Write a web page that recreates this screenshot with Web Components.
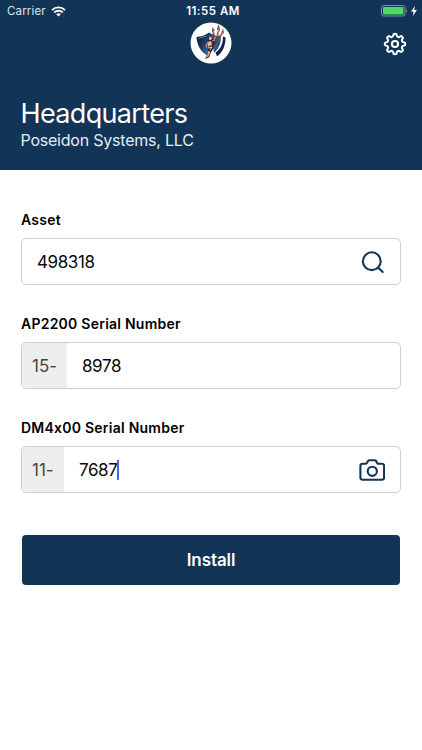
<!DOCTYPE html>
<html lang="en">
<head>
<meta charset="utf-8">
<title>Install</title>
<style>
    body {
        margin: 0;
        background: #fff;
        color: #0a0a0a;
        font-family: Inter, "Liberation Sans", sans-serif;
        font-feature-settings: "calt" 0;
    }
</style>
</head>
<body>
<install-screen></install-screen>

<script>
class StatusBar extends HTMLElement {
    constructor() {
        super();
        this.attachShadow({ mode: 'open' });
    }

    connectedCallback() {
        this.shadowRoot.innerHTML = `
            <style>
                :host {
                    display: grid;
                    grid-template-columns: 1fr auto 1fr;
                    align-items: center;
                    height: 22px;
                    padding: 0 5px 0 7px;
                    font-size: 11.5px;
                    line-height: 22px;
                }

                svg {
                    display: block;
                }

                .carrier, .power {
                    display: flex;
                    align-items: center;
                    gap: 5px;
                }

                .carrier {
                    color: #dbe4ee;
                    letter-spacing: 0.15px;
                }

                .power {
                    justify-content: flex-end;
                    gap: 3px;
                }

                .time {
                    padding-left: 2px;
                    font-weight: 600;
                    letter-spacing: 0.5px;
                }
            </style>

            <div class="carrier">
                <span>Carrier</span>
                <svg width="15" height="11" viewBox="0 0 15 11" fill="none" stroke="#fff" stroke-width="1.9">
                    <path d="M1 4.1a9.2 9.2 0 0 1 13 0M3.3 6.5a6 6 0 0 1 8.4 0"/>
                    <path d="M7.5 10.6 5.2 8.3a3.3 3.3 0 0 1 4.6 0z" fill="#fff" stroke="none"/>
                </svg>
            </div>
            <span class="time"><slot></slot></span>
            <div class="power">
                <svg width="27" height="12" viewBox="0 0 27 12">
                    <rect x=".5" y=".5" width="23.5" height="10.5" rx="2.2" fill="none" stroke="#8794a5"/>
                    <rect x="2" y="2" width="20.5" height="7.5" rx=".8" fill="#4cd964"/>
                    <path d="M25.2 4c1.3.5 1.3 3 0 3.6z" fill="#8794a5"/>
                </svg>
                <svg width="6" height="10" viewBox="0 0 6 10"><path d="M4 0 0 5.6h2.6L1.8 10 6 4.1H3.3z" fill="#fff"/></svg>
            </div>
        `;
    }
}

class TridentLogo extends HTMLElement {
    constructor() {
        super();
        this.attachShadow({ mode: 'open' });
    }

    connectedCallback() {
        this.shadowRoot.innerHTML = `
            <style>
                :host {
                    display: block;
                    width: 42px;
                    height: 42px;
                }

                svg {
                    display: block;
                }
            </style>

            <svg width="42" height="42" viewBox="0 0 42 42">
                <defs>
                    <linearGradient id="shield" x1="0" y1=".2" x2="1" y2=".7">
                        <stop offset="0" stop-color="#0d1a33"/>
                        <stop offset=".35" stop-color="#1d3d66"/>
                        <stop offset=".65" stop-color="#3778ad"/>
                        <stop offset="1" stop-color="#16365d"/>
                    </linearGradient>
                </defs>
                <circle cx="21" cy="21" r="20.5" fill="#fff"/>
                <!-- shield with its rim broken open on the right -->
                <path d="M6.500 15q7-.5 12.500-4.500l6 3 6 1.500c0 6-2 11-6 15l-6 4.500C11.500 31 7 24 6.500 15z" fill="url(#shield)"/>
                <path d="m8.500 16.500 8-2.500" stroke="#9db8d0" stroke-width=".6"/>
                <path d="M33 14.500 35.500 15.500c0 8-2.500 14.500-8.500 19l-1.500-4c5-3.500 7.500-8 7.500-16z" fill="#14233e"/>
                <path d="m17 36 2-8 4-3 1 6 3 4-6 2z" fill="#fff"/>
                <!-- trident -->
                <path d="M29 7.500 25.500 21 17 36" fill="none" stroke="#59363a" stroke-width="1.600"/>
                <path d="m23 9 1.200 4.500q3 2.500 6.300.5L33 9.500" fill="none" stroke="#703d39" stroke-width="1.700"/>
                <path d="m22 10 .3-5 2.700 3.800zM26.800 8l1.700-6 1.800 6zM31.200 11l2-5 .7 5.500z" fill="#8b4d43"/>
                <path d="m23.300 9 1.400 4 3.300 1L29 7M32.500 10 30 14" fill="none" stroke="#e7a992" stroke-width=".8"/>
                <!-- figure -->
                <path d="m18.500 15 3-1 1.500 4 2-2 1 2-2 4-1 5-2.500 3-1 5-4.500 2 2-4 1-6-2-3 1-4z" fill="#282631"/>
                <path d="m19 15 2-.5 1 2-1 1.500h-2zM17 20l4-1 1 4-4 2zM18 29l2.500.5-2 5-2.500 1.500 1.500-3.500z" fill="#e5a483"/>
                <path d="m22 19 2.500-.5.8-4M16 22l1 4" fill="none" stroke="#d68868" stroke-width="1.200"/>
                <path d="m18 22 4-1M19 17l2-1M18 26l4-1-2 3" fill="none" stroke="#b8d6e9" stroke-width="1"/>
            </svg>
        `;
    }
}

class LineIcon extends HTMLElement {
    constructor() {
        super();
        this.attachShadow({ mode: 'open' });
    }

    connectedCallback() {
        this.render();
    }

    // Eight rounded teeth around a 12,12 centre
    gearPath() {
        const at = (degrees, radius) => {
            const angle = degrees * Math.PI / 180;
            return `${(12 + radius * Math.sin(angle)).toFixed(2)} ${(12 - radius * Math.cos(angle)).toFixed(2)}`;
        };
        let path = `M${at(-8, 10)}`;
        for (let tooth = 0; tooth < 360; tooth += 45) {
            path += `Q${at(tooth, 10.6)} ${at(tooth + 8, 10)}`;
            path += `L${at(tooth + 13, 8.3)}`;
            path += `Q${at(tooth + 22.5, 7)} ${at(tooth + 32, 8.3)}`;
            path += `L${at(tooth + 37, 10)}`;
        }
        return path + 'Z';
    }

    render() {
        const icons = {
            settings: `<path d="${this.gearPath()}" stroke-width="2"/><circle cx="12" cy="12" r="3.1" stroke-width="2"/>`,
            search: '<circle cx="10.800" cy="11.200" r="8.900"/><path d="m17.300 17.700 4.400 4.300"/>',
            camera: '<path d="M2.600 4.800h3.200q.8 0 1.200-.7l1.200-2q.5-.8 1.400-.8h5.300q.9 0 1.400.8l1.200 2q.4.7 1.200.7h3.400q2.200 0 2.200 2v11.700q0 2.200-2.200 2.200H2.600q-2 0-2-2.200V6.800q0-2 2-2z"/><circle cx="12.500" cy="12.300" r="4.600"/>'
        };
        const name = this.getAttribute('name');
        const viewBox = name === 'camera' ? '-.8 -1 26.500 24' : '0 0 24 24';

        this.shadowRoot.innerHTML = `
            <style>
                :host {
                    display: block;
                    width: ${name === 'camera' ? '26.5px' : '24px'};
                    height: 24px;
                }

                svg {
                    display: block;
                    width: 100%;
                    height: 100%;
                }
            </style>

            <svg viewBox="${viewBox}" fill="none" stroke="currentColor" stroke-width="2.1" stroke-linecap="round" stroke-linejoin="round">${icons[name]}</svg>
        `;
    }
}

class SiteHeader extends HTMLElement {
    constructor() {
        super();
        this.attachShadow({ mode: 'open' });
    }

    connectedCallback() {
        this.shadowRoot.innerHTML = `
            <style>
                :host {
                    display: flex;
                    flex-direction: column;
                    box-sizing: border-box;
                    height: 170px;
                    background: #123456;
                    color: #fff;
                }

                .toolbar {
                    display: grid;
                    grid-template-columns: 1fr auto 1fr;
                    align-items: center;
                    height: 42px;
                    padding: 0 15px;
                }

                trident-logo {
                    grid-column: 2;
                }

                line-icon {
                    justify-self: end;
                    margin-top: 1px;
                }

                .titles {
                    padding: 33px 20.5px 0;
                }

                h1, p {
                    margin: 0;
                    font-weight: 400;
                    white-space: nowrap;
                }

                h1 {
                    font-size: 27px;
                    line-height: 33px;
                    letter-spacing: -0.65px;
                }

                p {
                    color: #e3edf6;
                    font-size: 16px;
                    line-height: 20px;
                    letter-spacing: -0.22px;
                }
            </style>

            <status-bar>11:55 AM</status-bar>
            <div class="toolbar">
                <trident-logo></trident-logo>
                <line-icon name="settings"></line-icon>
            </div>
            <div class="titles">
                <h1><slot name="title"></slot></h1>
                <p><slot name="company"></slot></p>
            </div>
        `;
    }
}

class FormField extends HTMLElement {
    constructor() {
        super();
        this.attachShadow({ mode: 'open' });
    }

    connectedCallback() {
        this.render();
    }

    render() {
        const prefix = this.getAttribute('prefix');
        const icon = this.getAttribute('icon');

        this.shadowRoot.innerHTML = `
            <style>
                :host {
                    display: block;
                }

                .label {
                    color: #000;
                    font-size: 14px;
                    font-weight: 600;
                    line-height: 20px;
                    letter-spacing: 0.24px;
                }

                .box {
                    display: flex;
                    align-items: center;
                    box-sizing: border-box;
                    height: 47px;
                    margin-top: 8px;
                    overflow: hidden;
                    border: 1px solid #cfcfcf;
                    border-radius: 5px;
                    font-size: 17px;
                    line-height: 24px;
                }

                .prefix {
                    display: flex;
                    align-items: center;
                    box-sizing: border-box;
                    width: var(--prefix-width);
                    height: 100%;
                    padding-left: 10px;
                    background: #eee;
                    color: #444;
                }

                .value {
                    display: flex;
                    align-items: center;
                    flex: 1;
                    padding-left: 15px;
                    letter-spacing: -0.4px;
                }

                .caret {
                    width: 2px;
                    height: 20px;
                    margin-left: -0.5px;
                    background: #4669dc;
                }

                line-icon {
                    margin-right: 15px;
                    color: #123456;
                }
            </style>

            <div class="label">${this.getAttribute('label')}</div>
            <div class="box">
                ${prefix ? `<span class="prefix">${prefix}</span>` : ''}
                <div class="value"><slot></slot>${this.hasAttribute('focused') ? '<i class="caret"></i>' : ''}</div>
                ${icon ? `<line-icon name="${icon}"></line-icon>` : ''}
            </div>
        `;
    }
}

class PrimaryButton extends HTMLElement {
    constructor() {
        super();
        this.attachShadow({ mode: 'open' });
    }

    connectedCallback() {
        this.shadowRoot.innerHTML = `
            <style>
                :host {
                    display: block;
                }

                button {
                    display: block;
                    width: 100%;
                    height: 50px;
                    padding: 0;
                    border: 0;
                    border-radius: 4px;
                    background: #123456;
                    color: #fff;
                    font: 600 17px/50px Inter, "Liberation Sans", sans-serif;
                    letter-spacing: -0.1px;
                }
            </style>

            <button type="button"><slot></slot></button>
        `;
    }
}

class InstallScreen extends HTMLElement {
    constructor() {
        super();
        this.attachShadow({ mode: 'open' });
    }

    connectedCallback() {
        this.shadowRoot.innerHTML = `
            <style>
                :host {
                    display: block;
                    height: 750px;
                    overflow: hidden;
                }

                .form {
                    display: flex;
                    flex-direction: column;
                    gap: 29px;
                    padding: 40px 21px 0;
                }

                primary-button {
                    margin: 13px 1px 0;
                }
            </style>

            <site-header>
                <span slot="title">Headquarters</span>
                <span slot="company">Poseidon Systems, LLC</span>
            </site-header>
            <div class="form">
                <form-field label="Asset" icon="search">498318</form-field>
                <form-field label="AP2200 Serial Number" prefix="15-" style="--prefix-width: 45px">8978</form-field>
                <form-field label="DM4x00 Serial Number" prefix="11-" icon="camera" style="--prefix-width: 42px" focused>7687</form-field>
                <primary-button>Install</primary-button>
            </div>
        `;
    }
}

customElements.define('status-bar', StatusBar);
customElements.define('trident-logo', TridentLogo);
customElements.define('line-icon', LineIcon);
customElements.define('site-header', SiteHeader);
customElements.define('form-field', FormField);
customElements.define('primary-button', PrimaryButton);
customElements.define('install-screen', InstallScreen);
</script>
</body>
</html>
